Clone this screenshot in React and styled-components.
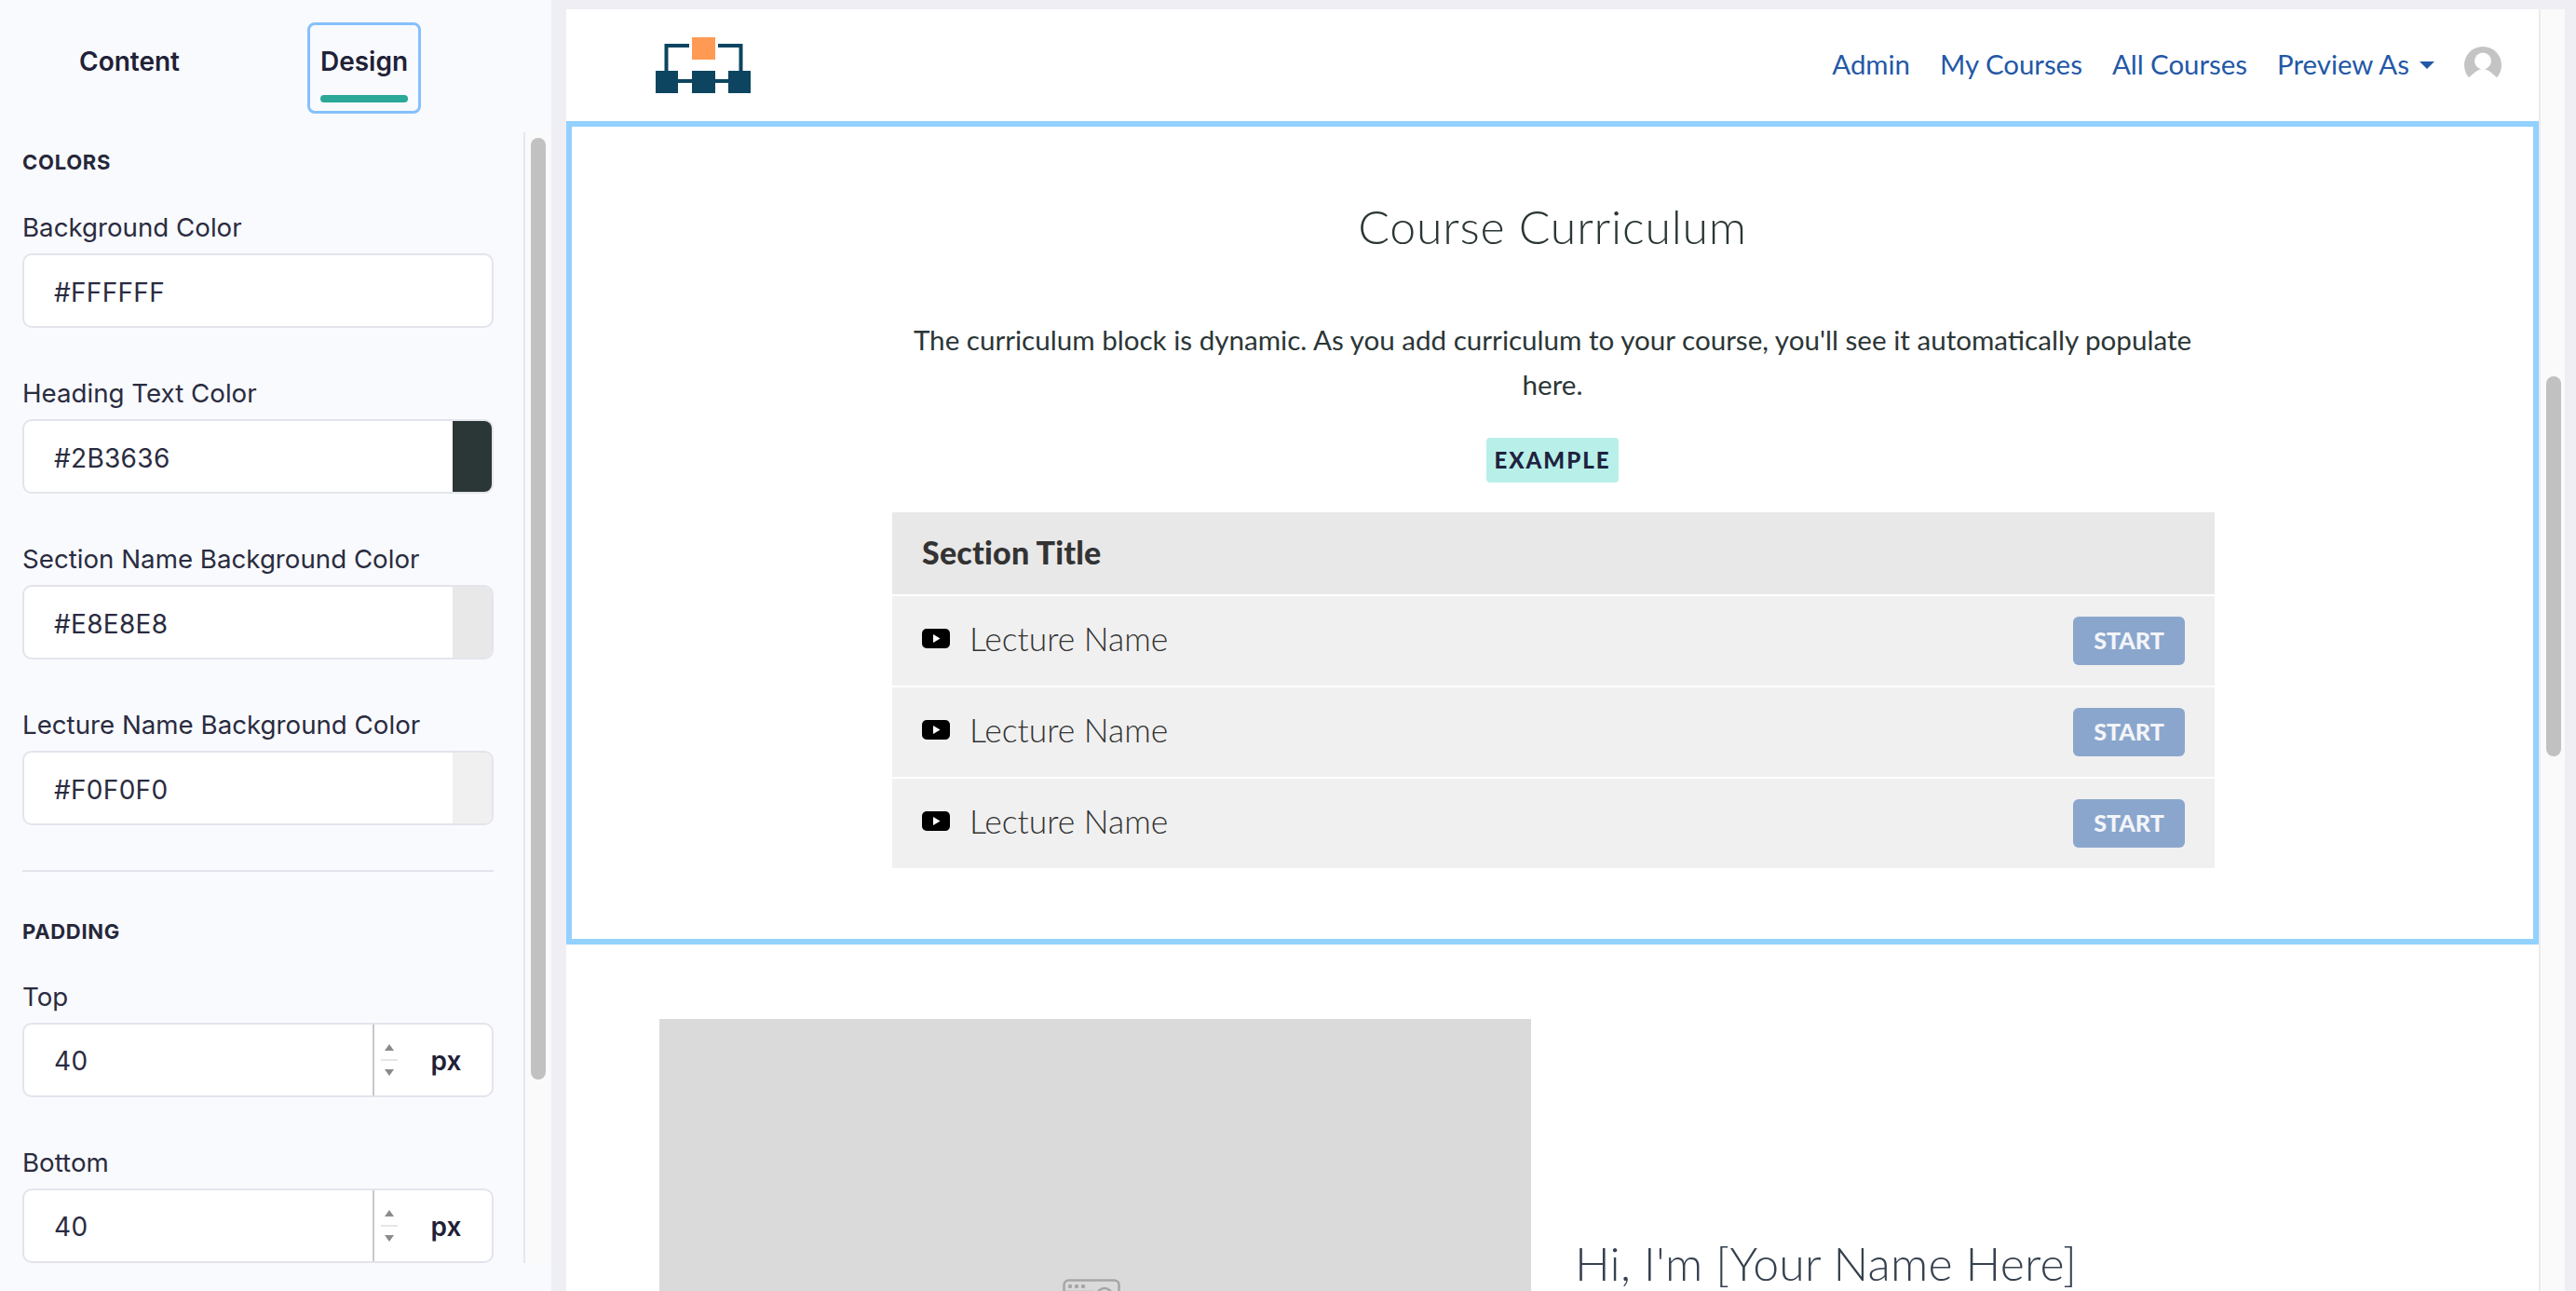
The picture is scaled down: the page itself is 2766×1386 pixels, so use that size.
import React from 'react'
import styled, { createGlobalStyle } from 'styled-components'

const GlobalStyle = createGlobalStyle`
  html, body {
    margin: 0;
    height: 100%;
    overflow: hidden;
    background: #eeeef4;
  }
  * { box-sizing: border-box; }
`

const Page = styled.div`
  display: flex;
  width: 2766px;
  height: 1386px;
  overflow: hidden;
`

/* ---------- left panel ---------- */

const Sidebar = styled.aside`
  width: 592px;
  height: 100%;
  flex: none;
  margin-right: 16px;
  background: #f9fafe;
  font-family: Inter, "Liberation Sans", sans-serif;
  color: #1f2137;
`

const Tabs = styled.div`
  display: flex;
  gap: 130px;
  height: 142px;
  padding: 24px 0 0 78px;
`

const Tab = styled.div`
  width: 122px;
  height: 98px;
  padding-top: 22px;
  border: 3px solid ${p => (p.$active ? '#85c0fb' : 'transparent')};
  border-radius: 8px;
  display: flex;
  flex-direction: column;
  align-items: center;
  font-size: 28px;
  font-weight: 600;
  line-height: 34px;
`

const TabBar = styled.div`
  width: 94px;
  height: 8px;
  margin-top: 19px;
  border-radius: 4px;
  background: #2ba897;
`

const ScrollArea = styled.div`
  display: flex;
  height: 1214px;
`

const Form = styled.div`
  width: 562px;
  height: 100%;
  padding: 18px 32px 0 24px;
  overflow: hidden;
`

const GroupTitle = styled.div`
  font-size: 22px;
  font-weight: 700;
  line-height: 29px;
  letter-spacing: 0.7px;
  margin-bottom: 35px;
  color: #25273a;
`

const Field = styled.div`
  margin-bottom: 50px;
`

const Label = styled.div`
  font-size: 27.7px;
  line-height: 41px;
  margin-bottom: 7px;
  color: #2a2c40;
`

const InputBox = styled.div`
  display: flex;
  align-items: stretch;
  height: 80px;
  background: #fff;
  border: 2px solid #e3e4ec;
  border-radius: 10px;
  overflow: hidden;
`

const InputValue = styled.div`
  flex: 1;
  display: flex;
  align-items: center;
  padding: ${p => (p.$short ? 2 : 4)}px 0 0 32px;
  font-size: 28px;
  letter-spacing: 0.3px;
  color: #2a2c40;
`

const Swatch = styled.div`
  width: 42px;
  background: ${p => p.$color};
`

const Stepper = styled.div`
  width: 128px;
  display: flex;
  align-items: center;
  border-left: 2px solid #c6c7cd;
`

const Arrows = styled.div`
  width: 32px;
  display: flex;
  flex-direction: column;
  align-items: center;
  gap: 9px;
`

const ArrowLine = styled.div`
  width: 18px;
  height: 2px;
  background: #e6e6e6;
`

const Unit = styled.div`
  flex: 1;
  text-align: center;
  padding: 2px 4px 0 0;
  font-size: 28px;
  font-weight: 600;
`

const Divider = styled.div`
  height: 2px;
  margin: -2px 0 50px;
  background: #e3e4ec;
`

const SideTrack = styled.div`
  width: 28px;
  height: 100%;
  padding: 6px 6px 0 6px;
  border-left: 2px solid #e6e7ee;
  background: #fafafa;
`

const Thumb = styled.div`
  width: 16px;
  height: ${p => p.$height}px;
  border-radius: 8px;
  background: #c1c1c1;
`

/* ---------- preview ---------- */

const PreviewWrap = styled.div`
  display: flex;
  margin-top: 10px;
  height: 1376px;
`

const Preview = styled.main`
  width: 2118px;
  height: 100%;
  background: #fff;
  overflow: hidden;
  font-family: Lato, "Liberation Sans", sans-serif;
`

const PageTrack = styled.div`
  width: 28px;
  height: 100%;
  padding: 394px 5px 0 6px;
  border-left: 2px solid #ebebeb;
  background: #fafafa;
`

const Nav = styled.nav`
  display: flex;
  align-items: center;
  justify-content: space-between;
  height: 120px;
  padding: 0 40px 0 96px;
`

const NavLinks = styled.div`
  display: flex;
  align-items: center;
  gap: 32px;
`

const NavLink = styled.a`
  display: flex;
  align-items: center;
  padding-bottom: 3px;
  font-size: 29.4px;
  font-weight: 400;
  color: #2358a6;
`

const Caret = styled.span`
  width: 0;
  height: 0;
  margin: 3px 0 0 11px;
  border-left: 8px solid transparent;
  border-right: 8px solid transparent;
  border-top: 8px solid #2358a6;
`

const Block = styled.section`
  height: 884px;
  padding-top: 77px;
  border: 6px solid #93d1ff;
  display: flex;
  flex-direction: column;
  align-items: center;
  color: #2b3636;
`

const BlockTitle = styled.h2`
  margin: 0 0 68px;
  font-size: 50px;
  font-weight: 300;
  line-height: 60px;
  letter-spacing: 0.8px;
`

const Intro = styled.p`
  width: 1420px;
  margin: 0 0 33px;
  text-align: center;
  font-size: 29.6px;
  font-weight: 400;
  line-height: 48px;
`

const Badge = styled.div`
  width: 142px;
  height: 48px;
  margin-bottom: 32px;
  padding-bottom: 1px;
  border-radius: 4px;
  display: flex;
  align-items: center;
  justify-content: center;
  background: #b8f0e9;
  color: #1f2240;
  font-size: 24px;
  font-weight: 900;
  letter-spacing: 2px;
`

const Curriculum = styled.div`
  width: 1420px;
  margin-left: 2px;
  display: flex;
  flex-direction: column;
  gap: 2px;
  color: #333;
`

const SectionRow = styled.div`
  height: 88px;
  padding: 0 0 4px 32px;
  display: flex;
  align-items: center;
  background: #e8e8e8;
  font-size: 34px;
  font-weight: 900;
  letter-spacing: 0.2px;
`

const LectureRow = styled.div`
  height: 96px;
  padding: 0 32px;
  display: flex;
  align-items: center;
  background: #f0f0f0;
`

const LectureIcon = styled.svg`
  margin-bottom: 5px;
`

const LectureName = styled.div`
  flex: 1;
  margin: 0 0 6px 21px;
  font-size: 35.5px;
  font-weight: 300;
`

const StartButton = styled.div`
  width: 120px;
  height: 52px;
  padding-bottom: 2px;
  border-radius: 6px;
  display: flex;
  align-items: center;
  justify-content: center;
  background: #8aa6cd;
  color: #f3f5f9;
  font-size: 25px;
  font-weight: 900;
`

const Bio = styled.section`
  display: flex;
  gap: 47px;
  padding: 80px 0 0 100px;
`

const BioImage = styled.div`
  width: 936px;
  height: 608px;
  flex: none;
  padding-right: 8px;
  display: flex;
  align-items: center;
  justify-content: center;
  background: #dadada;
`

const BioHeading = styled.h2`
  margin: 232px 0 0;
  font-size: 50px;
  font-weight: 300;
  line-height: 60px;
  letter-spacing: 0.2px;
  color: #36414f;
`

/* ---------- drawings ---------- */

const Logo = () => (
  <svg width="104" height="60" viewBox="0 0 104 60">
    <rect x="39" y="0" width="25" height="24" fill="#ff9a55" />
    <path d="M36 9H11.5V36M67 9H91.5V36" fill="none" stroke="#0d4560" strokeWidth="4" />
    <path d="M24 47H78" stroke="#0d4560" strokeWidth="4" />
    <rect x="0" y="36" width="24" height="24" fill="#0d4560" />
    <rect x="39" y="36" width="25" height="24" fill="#0d4560" />
    <rect x="78" y="36" width="24" height="24" fill="#0d4560" />
  </svg>
)

const Avatar = () => (
  <svg width="40" height="40" viewBox="0 0 40 40">
    <circle cx="20" cy="20" r="20" fill="#c4c4c4" />
    <ellipse cx="20" cy="15.5" rx="9" ry="9" fill="#fff" />
    <path d="M3 35C10 29 14 24 20 24S30 29 37 35V40H3z" fill="#fff" />
  </svg>
)

const VideoIcon = () => (
  <LectureIcon width="30" height="21" viewBox="0 0 30 21">
    <rect width="30" height="21" rx="5" fill="#000" />
    <path d="M12 6l7.5 4.5L12 15z" fill="#fff" />
  </LectureIcon>
)

const UpDown = () => (
  <Arrows>
    <svg width="10" height="7" viewBox="0 0 10 7"><path d="M5 0l5 7H0z" fill="#8b8b8b" /></svg>
    <ArrowLine />
    <svg width="10" height="7" viewBox="0 0 10 7"><path d="M5 7L0 0h10z" fill="#8b8b8b" /></svg>
  </Arrows>
)

const ImagePlaceholder = () => (
  <svg width="62" height="50" viewBox="0 0 62 50" fill="none" stroke="#a6a6a6" strokeWidth="2.5">
    <rect x="1.5" y="1.5" width="59" height="47" rx="5" />
    <circle cx="45" cy="18" r="8" />
    <path d="M2 14h32M2 40l14-12 12 10 10-8 22 16" />
    <circle cx="8" cy="8" r="1" />
    <circle cx="15" cy="8" r="1" />
    <circle cx="22" cy="8" r="1" />
  </svg>
)

/* ---------- data ---------- */

const colorFields = [
  { label: 'Background Color', value: '#FFFFFF' },
  { label: 'Heading Text Color', value: '#2B3636', swatch: '#2b3636' },
  { label: 'Section Name Background Color', value: '#E8E8E8', swatch: '#e8e8e8' },
  { label: 'Lecture Name Background Color', value: '#F0F0F0', swatch: '#f0f0f0' },
]

const App = () => (
  <Page>
    <GlobalStyle />
    <Sidebar>
      <Tabs>
        <Tab>Content</Tab>
        <Tab $active>
          Design
          <TabBar />
        </Tab>
      </Tabs>
      <ScrollArea>
        <Form>
          <GroupTitle>COLORS</GroupTitle>
          {colorFields.map(f => (
            <Field key={f.label}>
              <Label>{f.label}</Label>
              <InputBox>
                <InputValue>{f.value}</InputValue>
                {f.swatch && <Swatch $color={f.swatch} />}
              </InputBox>
            </Field>
          ))}
          <Divider />
          <GroupTitle>PADDING</GroupTitle>
          {['Top', 'Bottom'].map(name => (
            <Field key={name}>
              <Label>{name}</Label>
              <InputBox>
                <InputValue $short>40</InputValue>
                <Stepper>
                  <UpDown />
                  <Unit>px</Unit>
                </Stepper>
              </InputBox>
            </Field>
          ))}
        </Form>
        <SideTrack>
          <Thumb $height={1011} />
        </SideTrack>
      </ScrollArea>
    </Sidebar>

    <PreviewWrap>
      <Preview>
        <Nav>
          <Logo />
          <NavLinks>
            <NavLink>Admin</NavLink>
            <NavLink>My Courses</NavLink>
            <NavLink>All Courses</NavLink>
            <NavLink>Preview As<Caret /></NavLink>
            <Avatar />
          </NavLinks>
        </Nav>
        <Block>
          <BlockTitle>Course Curriculum</BlockTitle>
          <Intro>
            The curriculum block is dynamic. As you add curriculum to your course, you'll see it automatically populate here.
          </Intro>
          <Badge>EXAMPLE</Badge>
          <Curriculum>
            <SectionRow>Section Title</SectionRow>
            {[1, 2, 3].map(n => (
              <LectureRow key={n}>
                <VideoIcon />
                <LectureName>Lecture Name</LectureName>
                <StartButton>START</StartButton>
              </LectureRow>
            ))}
          </Curriculum>
        </Block>
        <Bio>
          <BioImage>
            <ImagePlaceholder />
          </BioImage>
          <BioHeading>Hi, I'm [Your Name Here]</BioHeading>
        </Bio>
      </Preview>
      <PageTrack>
        <Thumb $height={408} />
      </PageTrack>
    </PreviewWrap>
  </Page>
)

export default App
